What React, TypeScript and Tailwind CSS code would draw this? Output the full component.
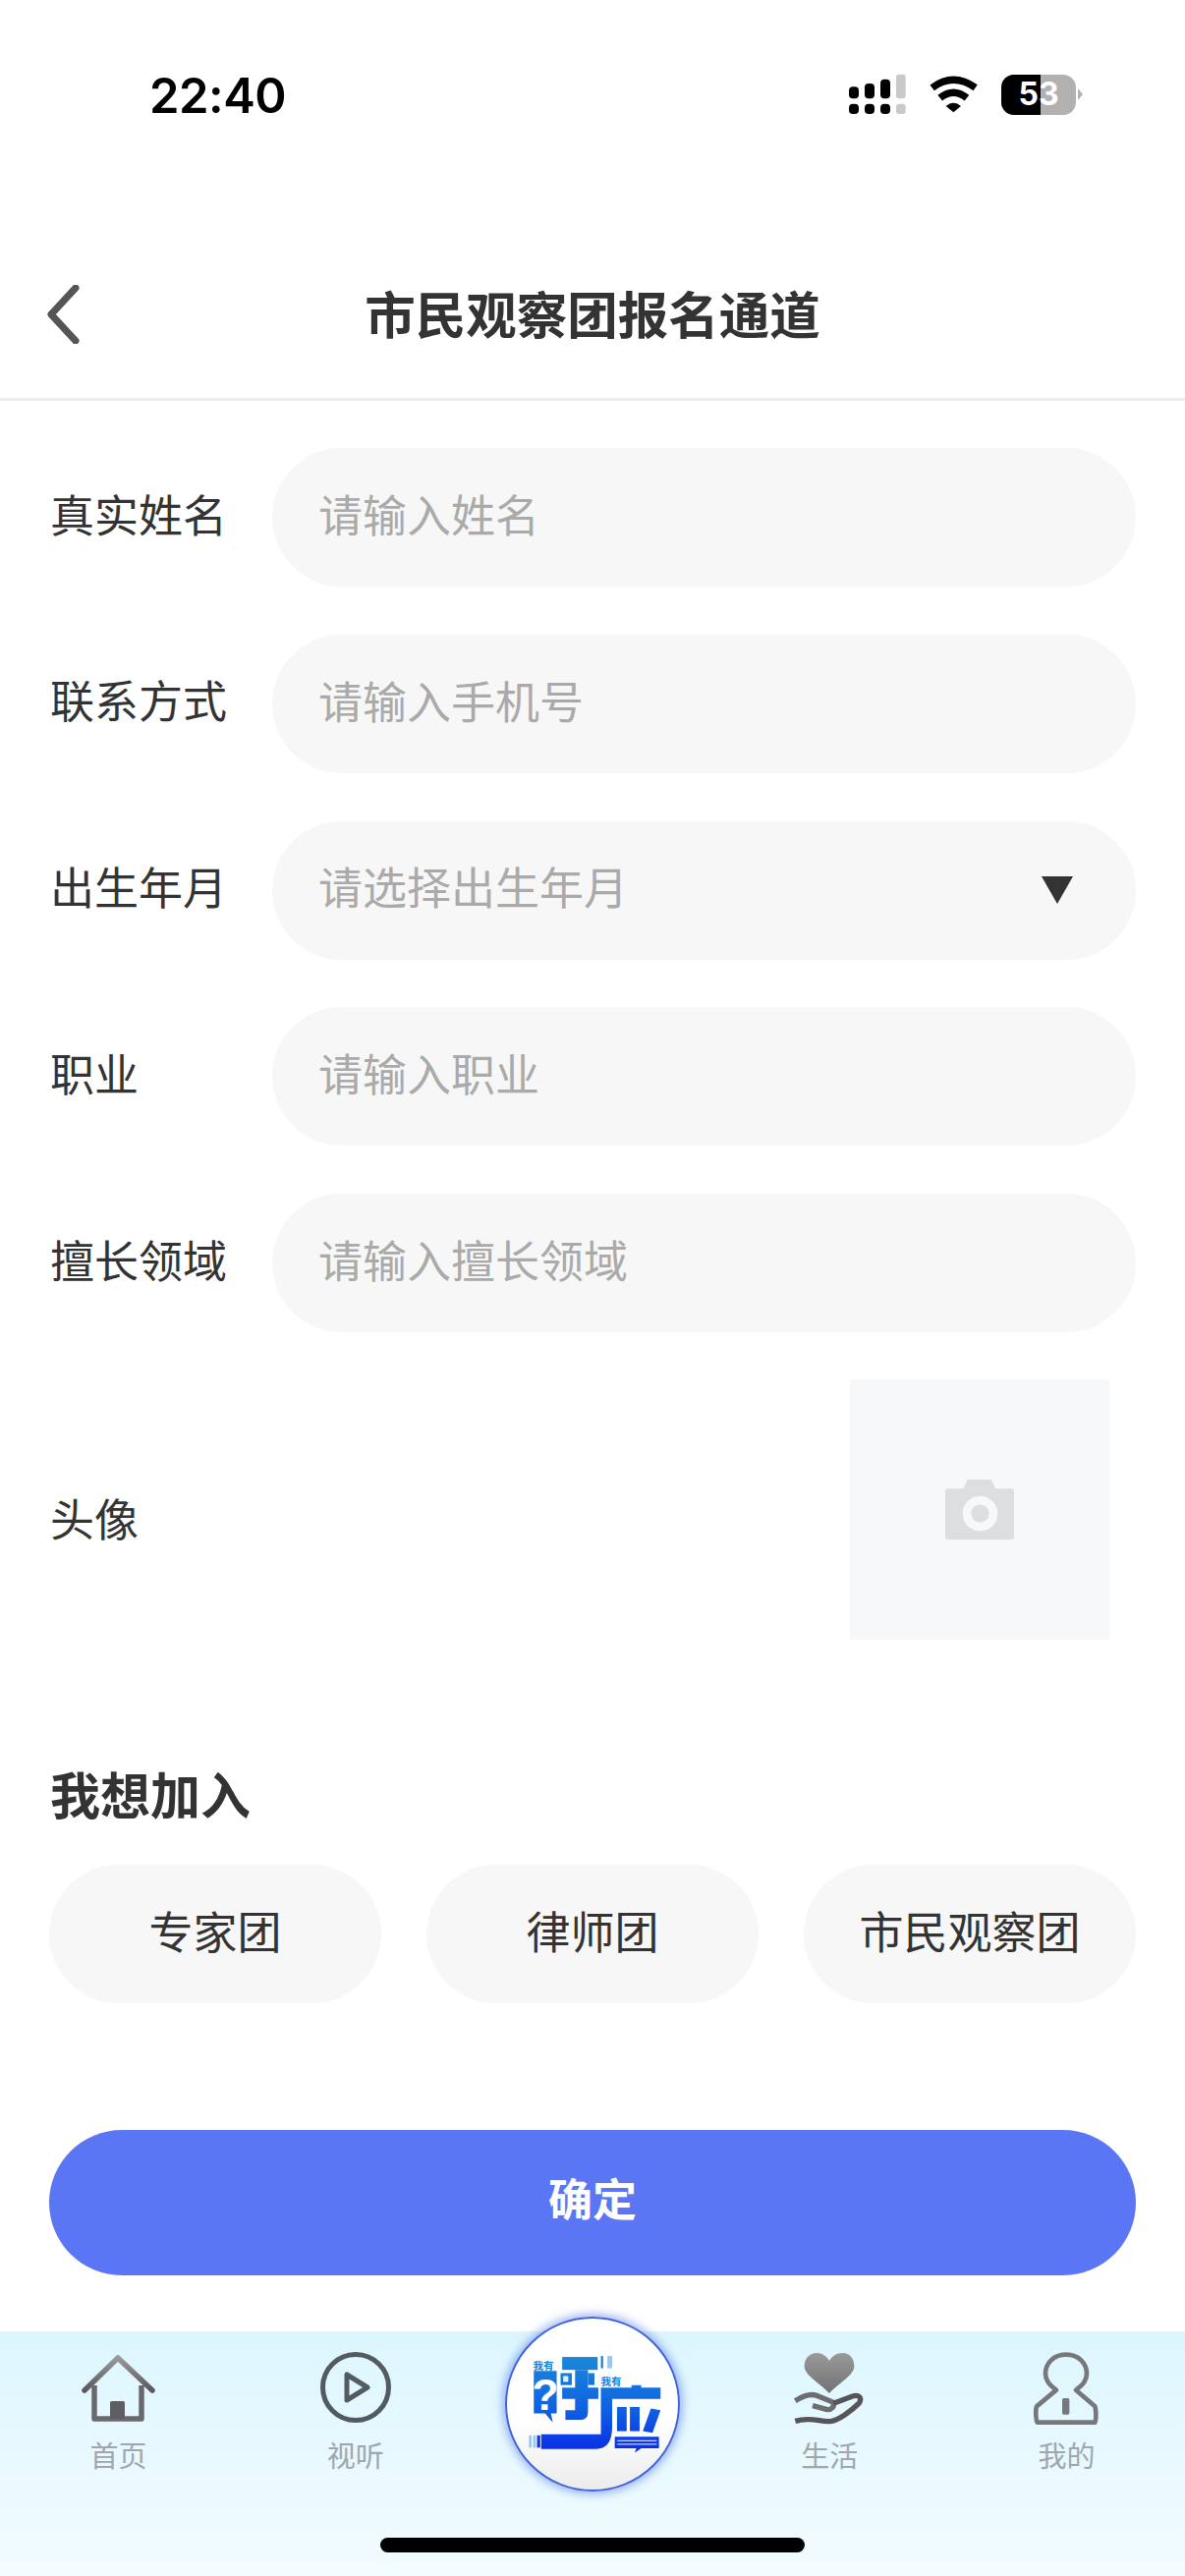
import React from 'react';

const CJK = 'font-["Liberation_Sans","Noto_Sans_CJK_SC",sans-serif]';

const fields = [
  { label: '真实姓名', placeholder: '请输入姓名' },
  { label: '联系方式', placeholder: '请输入手机号' },
  { label: '出生年月', placeholder: '请选择出生年月', select: true },
  { label: '职业', placeholder: '请输入职业' },
  { label: '擅长领域', placeholder: '请输入擅长领域' },
];

const teams = ['专家团', '律师团', '市民观察团'];

function StatusBar() {
  return (
    <div className="h-[240px] flex items-start justify-between pt-[66px] pl-[152px] pr-[104px]">
      <span className="font-['Inter',sans-serif] font-semibold text-[49px] leading-[64px] text-black tracking-[-0.5px]">22:40</span>
      <div className="flex items-center pt-[9px]">
        <svg width="60" height="42" viewBox="72 80 180 126" className="block">
          <g fill="#000">
            <rect x="75" y="172" width="30" height="31" rx="12" />
            <rect x="123" y="172" width="30" height="31" rx="12" />
            <rect x="171" y="172" width="30" height="31" rx="12" />
            <rect x="75" y="120" width="30" height="36" rx="12" />
            <rect x="123" y="110" width="30" height="46" rx="12" />
            <rect x="171" y="97" width="30" height="59" rx="12" />
          </g>
          <g fill="#c9c9c9">
            <rect x="219" y="172" width="29" height="31" rx="9" />
            <rect x="219" y="82" width="29" height="74" rx="9" />
          </g>
        </svg>
        <svg width="52" height="38" viewBox="315 85 156 114" className="block ml-[22px]">
          <path d="M326 122 Q391 74 458 122" fill="none" stroke="#000" strokeWidth="22" />
          <path d="M350 153 Q391 120 432 153" fill="none" stroke="#000" strokeWidth="22" />
          <path d="M368 178 Q391 158 414 178 L391 197 Z" fill="#000" />
        </svg>
        <div className="relative ml-[22px] w-[76px] h-[41px] rounded-[13px] overflow-hidden bg-[#b1b1b1]">
          <div className="w-[40px] h-full bg-black" />
          <span className="absolute inset-0 flex items-center justify-center font-['Inter',sans-serif] font-bold text-[32px] text-white">53</span>
        </div>
        <svg width="5" height="14" viewBox="0 0 5 14" className="ml-[2px] block">
          <path d="M0 1 L5 7 L0 13 Z" fill="#b1b1b1" />
        </svg>
      </div>
    </div>
  );
}

function NavBar() {
  return (
    <div className="h-[168px] border-b-[3px] border-[#ececec] grid grid-cols-[1fr_auto_1fr] items-center pb-[1px]">
      <div className="pl-[47px] -mt-[4px]">
        <svg width="36" height="60" viewBox="0 0 36 60" className="block">
          <path d="M30 3 L5 30 L30 57" fill="none" stroke="#555" strokeWidth="7" strokeLinecap="round" strokeLinejoin="round" />
        </svg>
      </div>
      <h1 className="text-[51.5px] leading-[64px] font-bold text-[#333]">市民观察团报名通道</h1>
      <div />
    </div>
  );
}

function CameraIcon() {
  return (
    <svg width="70" height="61" viewBox="365 378 207 180" className="block">
      <path d="M372 405 H420 L432 378 H503 L517 405 H564 Q572 405 572 413 V550 Q572 558 564 558 H373 Q365 558 365 550 V413 Q365 405 372 405 Z" fill="#dcdee0" />
      <circle cx="470" cy="480" r="53" fill="#f7f8fa" />
      <circle cx="470" cy="480" r="27" fill="#dcdee0" />
    </svg>
  );
}

function HomeIcon() {
  return (
    <svg width="90" height="76" viewBox="0 0 90 76" className="block">
      <defs>
        <linearGradient id="homeGrad" x1="0" y1="0" x2="0" y2="1">
          <stop offset="0" stopColor="#999" />
          <stop offset="1" stopColor="#5a5a5e" />
        </linearGradient>
      </defs>
      <path d="M10 40 L44 7 L79 40" fill="none" stroke="url(#homeGrad)" strokeWidth="5.5" strokeLinecap="round" strokeLinejoin="round" />
      <path d="M20 35 V69 H68 V35" fill="none" stroke="#6a6a6e" strokeWidth="5.5" strokeLinejoin="round" />
      <rect x="36" y="51" width="15" height="18" rx="1.5" fill="#5f5f63" />
    </svg>
  );
}

function PlayIcon() {
  return (
    <svg width="80" height="76" viewBox="0 0 80 76" className="block">
      <circle cx="40" cy="37" r="33.5" fill="none" stroke="#525b60" strokeWidth="5" />
      <path d="M31 24 V50 L52 37 Z" fill="none" stroke="#525b60" strokeWidth="5" strokeLinejoin="round" />
    </svg>
  );
}

function LifeIcon() {
  return (
    <svg width="76" height="76" viewBox="80 36 228 228" className="block">
      <defs>
        <linearGradient id="heartGrad" x1="0" y1="0" x2="0" y2="1">
          <stop offset="0" stopColor="#9a9a9a" />
          <stop offset="1" stopColor="#727272" />
        </linearGradient>
      </defs>
      <path d="M194 165 C160 130 118 110 118 82 C118 58 135 42 155 42 C172 42 186 52 194 66 C202 52 216 42 235 42 C255 42 270 58 270 82 C270 110 228 130 194 165 Z" fill="url(#heartGrad)" />
      <path d="M90 188 C115 172 135 165 155 172 L205 192 C212 205 200 218 185 214 L143 203" fill="none" stroke="#6e6e72" strokeWidth="16" />
      <path d="M207 196 L265 174 C285 168 295 180 285 195 C260 220 225 245 200 250 C170 255 140 235 90 250" fill="none" stroke="#55555a" strokeWidth="16" />
    </svg>
  );
}

function MineIcon() {
  return (
    <svg width="70" height="76" viewBox="815 36 210 228" className="block">
      <path d="M920 47 C960 47 983 75 983 105 C983 130 965 145 950 155 L1008 205 C1012 215 1012 252 1008 254 H832 C828 252 826 215 830 205 L890 155 C875 145 857 130 857 105 C857 75 880 47 920 47 Z" fill="none" stroke="#77777c" strokeWidth="14" strokeLinejoin="round" />
      <rect x="908" y="180" width="22" height="50" rx="5" fill="#77777c" />
    </svg>
  );
}

function Logo() {
  return (
    <div className="relative -mt-[15px] w-[178px] h-[178px] rounded-full border-[2px] border-[#3f63dc] bg-gradient-to-b from-white from-60% to-[#ececec] shadow-[0_0_8px_3px_rgba(90,125,235,0.55)] overflow-hidden">
      <svg viewBox="104 56 530 530" className="block w-full h-full">
        <defs>
          <linearGradient id="logoGrad" gradientUnits="userSpaceOnUse" x1="0" y1="170" x2="0" y2="470">
            <stop offset="0" stopColor="#1a8ad8" />
            <stop offset="0.55" stopColor="#0f62e2" />
            <stop offset="1" stopColor="#0a2ce8" />
          </linearGradient>
        </defs>
        <g fill="url(#logoGrad)">
          <path d="M187 218 H258 V350 H240 L246 378 L222 350 H187 Z" />
          <rect x="275" y="175" width="110" height="40" />
          <rect x="270" y="225" width="35" height="37" />
          <rect x="355" y="225" width="20" height="37" />
          <rect x="275" y="270" width="112" height="35" />
          <path d="M315 215 H355 V345 Q355 370 330 370 H285 V340 H315 Z" />
          <path d="M395 270 H490 V262 H520 V270 H580 V305 H430 V390 Q430 460 380 460 H210 V415 H395 Z" />
          <rect x="445" y="330" width="30" height="75" />
          <rect x="485" y="330" width="30" height="75" />
          <path d="M550 335 L580 340 L555 410 L525 405 Z" />
          <path d="M438 422 H575 V458 H520 L500 472 L505 458 H438 Z" />
          <rect x="395" y="172" width="7" height="38" />
          <rect x="197" y="418" width="10" height="38" />
        </g>
        <g fill="#9cc8ee">
          <rect x="415" y="172" width="15" height="38" />
          <rect x="172" y="418" width="8" height="38" />
          <rect x="185" y="418" width="8" height="38" />
        </g>
        <rect x="278" y="234" width="16" height="18" fill="#dff0ff" />
        <rect x="446" y="433" width="122" height="3" fill="#ffffff" />
        <rect x="446" y="444" width="122" height="3" fill="#ffffff" />
        <text x="185" y="214" fontSize="32" fontWeight="700" fill="#1a7ed6" className={CJK}>我有</text>
        <text x="395" y="262" fontSize="32" fontWeight="700" fill="#1a7ed6" className={CJK}>我有</text>
        <text x="223" y="340" textAnchor="middle" fontSize="135" fontWeight="700" fill="#fff" className="font-['Liberation_Sans',sans-serif]">?</text>
      </svg>
    </div>
  );
}

function TabItem({ icon, label }: { icon: React.ReactNode; label: string }) {
  return (
    <div className="flex flex-col items-center pt-[20px]">
      <div className="h-[76px] flex items-center justify-center">{icon}</div>
      <span className="mt-[15px] text-[29px] leading-[34px] text-[#a0a7ac]">{label}</span>
    </div>
  );
}

export default function App() {
  return (
    <div className={`w-[1206px] h-[2622px] bg-white flex flex-col overflow-hidden ${CJK}`}>
      <StatusBar />
      <NavBar />

      {/* form */}
      <div className="mt-[48px] px-[50px] flex flex-col gap-[48.75px]">
        {fields.map((f) => (
          <div key={f.label} className="flex items-center h-[141px]">
            <label className="w-[227px] pl-[1px] text-[45px] leading-[56px] text-[#333]">{f.label}</label>
            <div className="flex-1 h-full rounded-full bg-[#f7f7f7] flex items-center pl-[47px] pr-[64px]">
              {f.select ? (
                <>
                  <span className="flex-1 text-[45px] text-[#aaa]">{f.placeholder}</span>
                  <svg width="32" height="28" viewBox="0 0 32 28" className="block">
                    <path d="M0 0 H32 L16 28 Z" fill="#333" />
                  </svg>
                </>
              ) : (
                <input readOnly placeholder={f.placeholder} className="w-full bg-transparent outline-none text-[45px] placeholder:text-[#aaa]" />
              )}
            </div>
          </div>
        ))}
      </div>

      <div className="mt-[48px] pl-[51px] pr-[77px] flex items-center justify-between">
        <span className="text-[45px] leading-[56px] text-[#333] pt-[24px]">头像</span>
        <div className="w-[264px] h-[265px] bg-[#f7f8fa] flex items-center justify-center">
          <CameraIcon />
        </div>
      </div>

      <h2 className="mt-[131px] pl-[51px] pr-[50px] text-[51px] leading-[60px] font-bold text-[#333]">我想加入</h2>

      <div className="mt-[38px] px-[50px] flex justify-between">
        {teams.map((t) => (
          <div key={t} className="w-[338px] h-[141px] rounded-full bg-[#f7f7f7] flex items-center justify-center text-[45px] text-[#333]">
            {t}
          </div>
        ))}
      </div>

      <button className="mt-[129px] mx-[50px] h-[148px] rounded-full bg-[#5b76f5] text-white text-[45px] font-bold pb-[3px]">确定</button>

      {/* tab bar */}
      <div className="mt-auto h-[249px] bg-gradient-to-b from-[#dcf6fe] to-[#f3fcff] flex flex-col items-center">
        <div className="w-full h-[210px] grid grid-cols-5">
          <TabItem icon={<HomeIcon />} label="首页" />
          <TabItem icon={<PlayIcon />} label="视听" />
          <div className="flex justify-center">
            <Logo />
          </div>
          <TabItem icon={<LifeIcon />} label="生活" />
          <TabItem icon={<MineIcon />} label="我的" />
        </div>
        <div className="w-[432px] h-[15px] rounded-full bg-black" />
      </div>
    </div>
  );
}
